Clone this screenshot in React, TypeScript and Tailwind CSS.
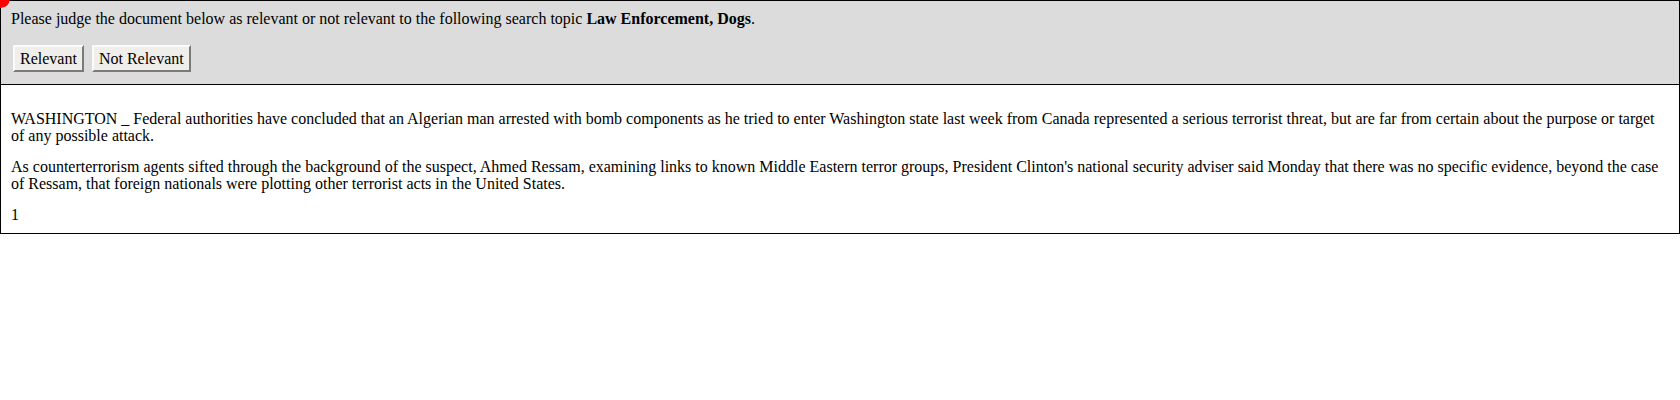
import React from "react";

const Btn = ({ children }: { children: React.ReactNode }) => (
  <button className="h-[27px] px-[5px] bg-[#f0eeea] border-2 border-t-[#fbfbfb] border-l-[#fbfbfb] border-r-[#7a7a7a] border-b-[#7a7a7a] leading-[17px] text-[16px] text-black">
    {children}
  </button>
);

export default function App() {
  return (
    <div className="relative w-full bg-white text-black text-[16px] font-['Liberation_Serif','Times_New_Roman',serif]">
      {/* little red marker peeking in at the corner */}
      <div className="absolute -left-[9px] -top-[11px] h-[19px] w-[19px] rounded-full bg-[#ff0000] z-10" />

      <div className="border border-black bg-[#dcdcdc] px-[10px] pt-[9px] pb-[12px]">
        <p className="leading-[17px]">
          Please judge the document below as relevant or not relevant to the following search topic{" "}
          <b>Law Enforcement, Dogs</b>.
        </p>
        <div className="mt-[18px] flex gap-[8px] pl-[2px]">
          <Btn>Relevant</Btn>
          <Btn>Not Relevant</Btn>
        </div>
      </div>

      <div className="border-x border-b border-black px-[10px] pt-[9px] pb-[10px] leading-[17px]">
        <p className="mt-[16px]">
          WASHINGTON _ Federal authorities have concluded that an Algerian man arrested with bomb components as he tried to enter Washington state last week from Canada represented a serious terrorist threat, but are far from certain about the purpose or target of any possible attack.
        </p>
        <p className="mt-[14px]">
          As counterterrorism agents sifted through the background of the suspect, Ahmed Ressam, examining links to known Middle Eastern terror groups, President Clinton's national security adviser said Monday that there was no specific evidence, beyond the case of Ressam, that foreign nationals were plotting other terrorist acts in the United States.
        </p>
        <p className="mt-[14px]">1</p>
      </div>
    </div>
  );
}
